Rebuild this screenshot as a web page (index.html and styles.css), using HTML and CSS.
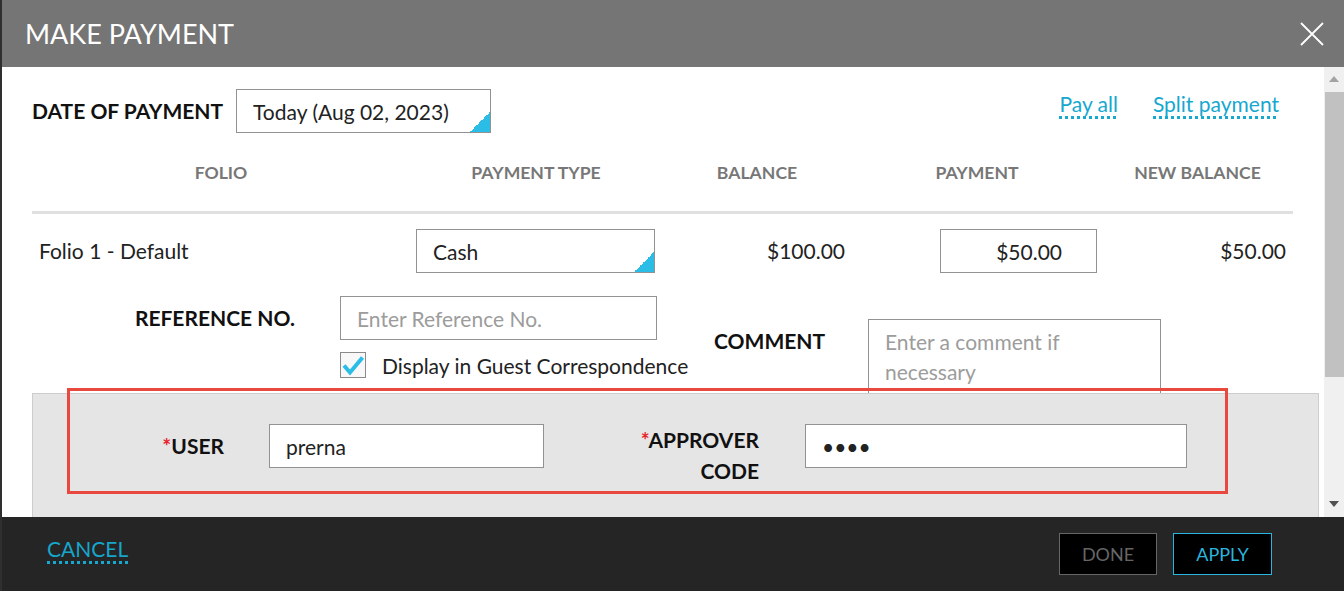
FILE: index.html
```html
<!DOCTYPE html>
<html lang="en">
<head>
    <meta charset="UTF-8">
    <meta name="viewport" content="width=device-width, initial-scale=1.0">
    <title>Make Payment</title>
    <link rel="stylesheet" href="styles.css">
</head>
<body>
<div class="dialog">
    <div class="dialog-header">
        <h1>MAKE PAYMENT</h1>
        <span class="close">
            <svg width="24" height="24" viewBox="0 0 24 24">
                <path d="M1 1 L23 23 M23 1 L1 23" stroke="#fff" stroke-width="1.8" fill="none"/>
            </svg>
        </span>
    </div>

    <div class="dialog-body">
        <div class="content">
            <div class="date-row">
                <label class="label date-label">DATE OF PAYMENT</label>
                <div class="select date-select">Today (Aug 02, 2023)</div>
                <div class="links">
                    <a class="link">Pay all</a>
                    <a class="link">Split payment</a>
                </div>
            </div>

            <div class="folio-table">
                <div class="th">FOLIO</div>
                <div class="th">PAYMENT TYPE</div>
                <div class="th">BALANCE</div>
                <div class="th">PAYMENT</div>
                <div class="th">NEW BALANCE</div>

                <div class="td folio-name">Folio 1 - Default</div>
                <div class="td"><div class="select type-select">Cash</div></div>
                <div class="td amount">$100.00</div>
                <div class="td pay-cell"><input class="input pay-input" type="text" value="$50.00"></div>
                <div class="td amount">$50.00</div>
            </div>

            <div class="extra-row">
                <label class="label ref-label">REFERENCE NO.</label>
                <div class="ref-block">
                    <input class="input ref-input" type="text" placeholder="Enter Reference No.">
                    <label class="check">
                        <span class="box">
                            <svg width="26" height="26" viewBox="0 0 26 26">
                                <path d="M4 13.5 L10 20.5 L22.5 5.5" stroke="#2bbde6" stroke-width="4" fill="none"/>
                            </svg>
                        </span>
                        Display in Guest Correspondence
                    </label>
                </div>
                <label class="label comment-label">COMMENT</label>
                <textarea class="comment" placeholder="Enter a comment if necessary"></textarea>
            </div>

            <div class="approval">
                <div class="highlight"></div>
                <label class="label user-label"><span class="req">*</span>USER</label>
                <input class="input user-input" type="text" value="prerna">
                <label class="label approver-label"><span class="req">*</span>APPROVER<br>CODE</label>
                <input class="input code-input" type="password" value="1234">
            </div>
        </div>

        <div class="scrollbar">
            <span class="arrow up"></span>
            <span class="thumb"></span>
            <span class="arrow down"></span>
        </div>
    </div>

    <div class="dialog-footer">
        <a class="link cancel">CANCEL</a>
        <div class="buttons">
            <button type="button" class="btn done">DONE</button>
            <button type="button" class="btn apply">APPLY</button>
        </div>
    </div>
</div>
</body>
</html>
```

FILE: styles.css
```css
body {
    margin: 0;
    padding: 0;
    overflow: hidden;
    font-family: Lato, "Liberation Sans", sans-serif;
    background-color: #2d2d2d;
}

.dialog {
    width: 1344px;
    height: 591px;
    box-sizing: border-box;
    border-left: 2px solid #2f2f2f;
    display: flex;
    flex-direction: column;
}

.dialog-header {
    height: 67px;
    flex: none;
    display: flex;
    align-items: center;
    justify-content: space-between;
    padding: 0 20px 0 23px;
    background-color: #757575;
}

.dialog-header h1 {
    margin: 0;
    font-size: 27px;
    font-weight: normal;
    color: #fff;
}

.close {
    display: flex;
}

.dialog-body {
    height: 450px;
    flex: none;
    display: flex;
    background-color: #fff;
}

.content {
    flex: 1;
    overflow: hidden;
    padding: 22px 30px 0 30px;
}

.label {
    font-size: 21px;
    font-weight: bold;
    color: #111;
}

.date-row {
    display: flex;
    align-items: flex-start;
}

.date-label {
    width: 204px;
    line-height: 44px;
}

.select,
.input {
    box-sizing: border-box;
    height: 44px;
    border: 1px solid #929292;
    background-color: #fff;
    font-family: inherit;
    font-size: 21px;
    color: #222;
    padding: 0 16px;
    outline: none;
}

.select {
    line-height: 43px;
    background: linear-gradient(to top left, #2bbde6 50%, transparent 50%) no-repeat right bottom / 20px 20px, #fff;
}

.date-select {
    width: 255px;
}

.links {
    margin-left: auto;
    margin-right: 15px;
    margin-top: 2px;
    display: flex;
    gap: 35px;
}

.link {
    font-size: 21px;
    line-height: 25px;
    color: #17a8cf;
    padding-bottom: 3px;
    cursor: pointer;
    background: repeating-linear-gradient(to right, #17a8cf 0 3px, transparent 3px 6px) no-repeat left bottom / 100% 3px;
}

.folio-table {
    display: grid;
    grid-template-columns: 378px 252px 190px 250px 191px;
}

.th {
    text-align: center;
    font-size: 17.6px;
    font-weight: bold;
    color: #777;
    line-height: 24px;
    padding: 28px 0 26px 0;
    border-bottom: 3px solid #e0e0e0;
}

.td {
    padding-top: 15px;
    line-height: 44px;
    font-size: 21px;
    color: #222;
}

.folio-name {
    padding-left: 7px;
}

.type-select {
    width: 239px;
    margin-left: 6px;
}

.amount {
    text-align: right;
    padding-right: 7px;
}

.pay-cell {
    display: flex;
    justify-content: flex-end;
    padding-right: 5px;
}

.pay-input {
    width: 157px;
    text-align: right;
    padding-right: 34px;
}

.extra-row {
    margin-top: 23px;
    height: 97px;
    display: flex;
    align-items: flex-start;
}

.ref-label {
    width: 263px;
    text-align: right;
    line-height: 44px;
    margin-right: 45px;
}

.ref-block {
    width: 317px;
}

.ref-input {
    width: 100%;
}

.input::placeholder,
.comment::placeholder {
    color: #9c9c9c;
}

.check {
    margin-top: 12px;
    display: flex;
    align-items: center;
    gap: 16px;
    font-size: 21px;
    color: #222;
    white-space: nowrap;
}

.box {
    width: 26px;
    height: 26px;
    box-sizing: border-box;
    border: 1px solid #8a8a8a;
    background-color: #f8f8f8;
    display: flex;
    flex: none;
}

.box svg {
    margin: -1px;
}

.comment-label {
    width: 154px;
    margin-left: 57px;
    margin-top: 23px;
    line-height: 44px;
}

.comment {
    width: 293px;
    height: 74px;
    margin-top: 23px;
    box-sizing: border-box;
    border: 1px solid #929292;
    border-bottom: none;
    padding: 7px 16px 0 16px;
    font-family: inherit;
    font-size: 21px;
    line-height: 30px;
    resize: none;
    outline: none;
    overflow: hidden;
}

.approval {
    position: relative;
    height: 160px;
    margin-right: -25px;
    box-sizing: border-box;
    border: 1px solid #cdcdcd;
    background-color: #e5e5e5;
    padding-top: 30px;
    display: flex;
    align-items: flex-start;
}

.highlight {
    position: absolute;
    left: 34px;
    top: -6px;
    width: 1161px;
    height: 106px;
    box-sizing: border-box;
    border: 3px solid #e8483e;
}

.req {
    color: #e8202a;
}

.user-label {
    width: 191px;
    text-align: right;
    line-height: 44px;
    margin-right: 45px;
}

.user-input {
    width: 275px;
}

.approver-label {
    width: 215px;
    text-align: right;
    line-height: 31px;
    margin-right: 46px;
}

.code-input {
    width: 382px;
}

.scrollbar {
    width: 20px;
    flex: none;
    display: flex;
    flex-direction: column;
    background-color: #f0f0f0;
}

.arrow {
    width: 0;
    height: 0;
    margin: 0 auto;
    border-left: 5px solid transparent;
    border-right: 5px solid transparent;
}

.arrow.up {
    margin-top: 9px;
    border-bottom: 6px solid #a3a3a3;
}

.thumb {
    height: 285px;
    margin: 10px 0 0 1px;
    background-color: #c1c1c1;
}

.arrow.down {
    margin-top: auto;
    margin-bottom: 10px;
    border-top: 6px solid #505050;
}

.dialog-footer {
    flex: 1;
    display: flex;
    align-items: flex-start;
    justify-content: space-between;
    padding: 16px 72px 0 45px;
    background-color: #252525;
}

.cancel {
    margin-top: 3px;
    color: #16a6cc;
}

.buttons {
    display: flex;
    gap: 16px;
}

.btn {
    width: 98px;
    height: 42px;
    background-color: #000;
    font-family: inherit;
    font-size: 18px;
    cursor: pointer;
}

.done {
    border: 1px solid #666;
    color: #666;
}

.apply {
    width: 99px;
    border: 1px solid #2ab5de;
    color: #2ab5de;
}
```
